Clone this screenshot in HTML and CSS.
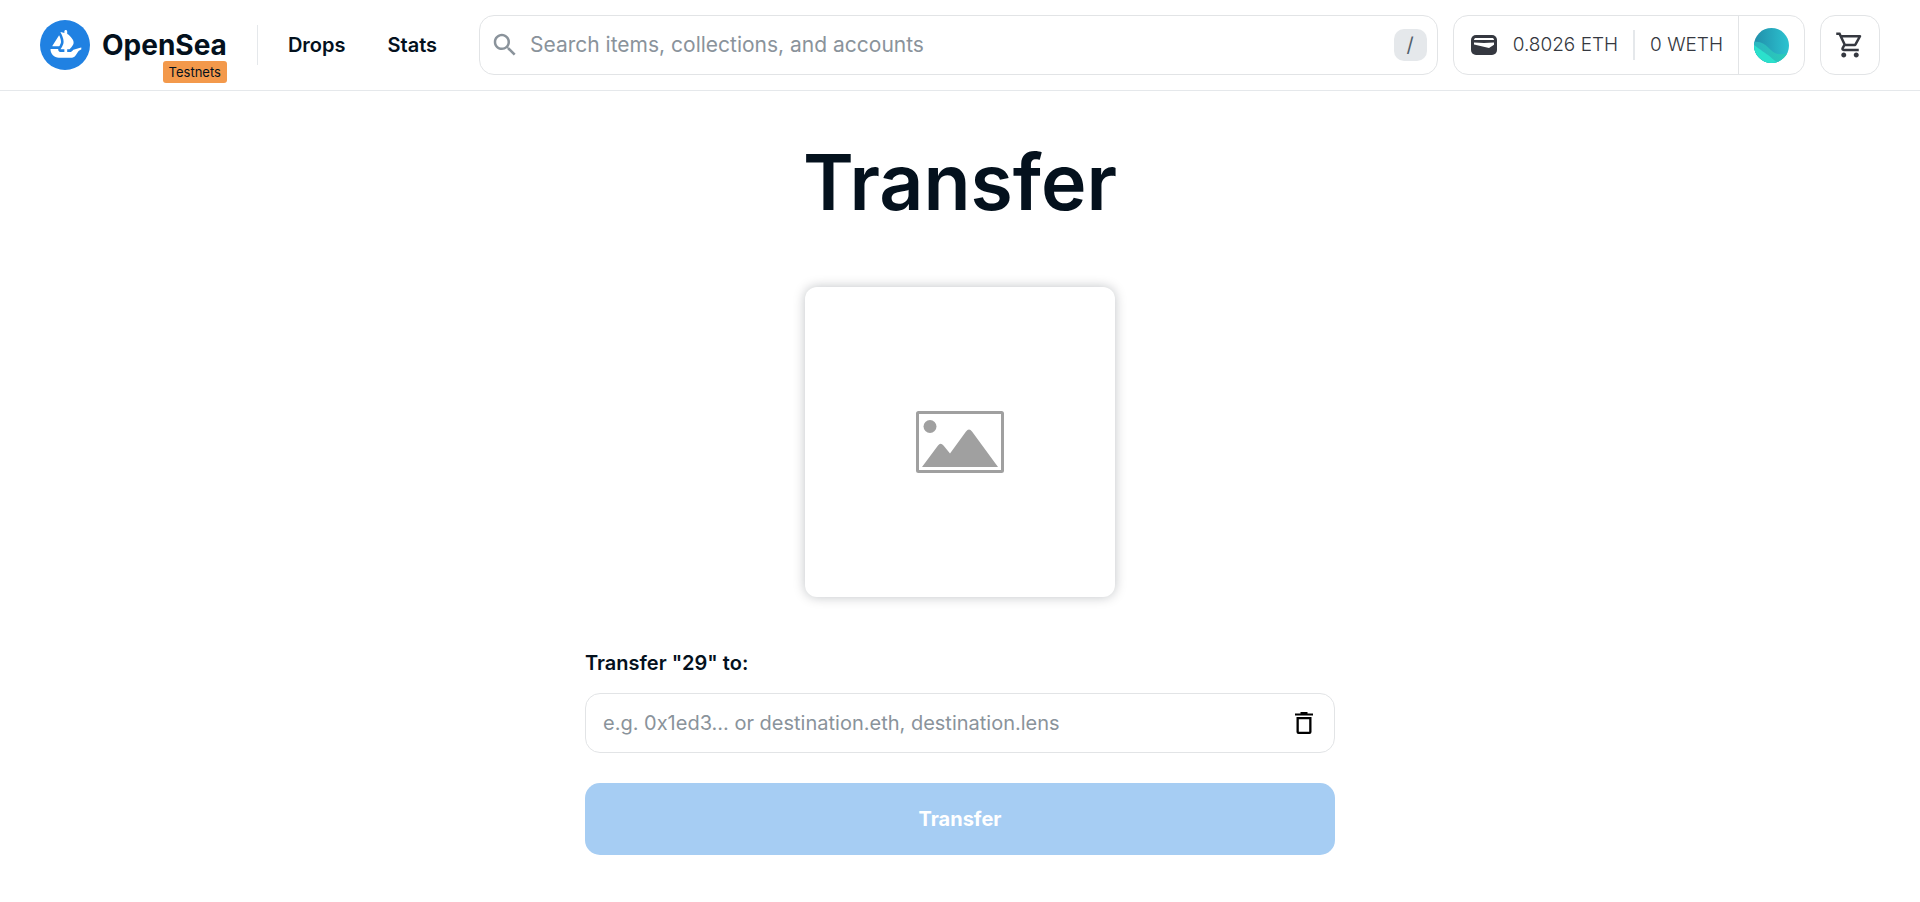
FILE: index.html
```html
<!DOCTYPE html>
<html lang="en">
<head>
<meta charset="utf-8">
<title>Transfer | OpenSea Testnets</title>
<link rel="stylesheet" href="styles.css">
</head>
<body>
<header class="header">
  <a class="brand" href="#">
    <svg class="brand-mark" viewBox="0 0 90 90" aria-hidden="true">
      <circle cx="45" cy="45" r="45" fill="#2081e2"/>
      <path fill="#fff" d="M22.2011 46.512L22.3953 46.2069L34.1016 27.8939C34.2726 27.6257 34.6749 27.6535 34.8043 27.9447C36.76 32.3277 38.4475 37.7786 37.6569 41.1721C37.3194 42.5683 36.3948 44.4593 35.3545 46.2069C35.2204 46.4612 35.0725 46.7109 34.9153 46.9513C34.8413 47.0622 34.7165 47.127 34.5824 47.127H22.5432C22.2196 47.127 22.0301 46.7756 22.2011 46.512Z"/>
      <path fill="#fff" d="M74.38 49.9149V52.8137C74.38 52.9801 74.2783 53.1281 74.1304 53.1928C73.2242 53.5812 70.1219 55.0052 68.832 56.799C65.5402 61.3807 63.0251 67.932 57.4031 67.932H33.949C25.6362 67.932 18.9 61.1726 18.9 52.8322V52.564C18.9 52.3421 19.0803 52.1618 19.3023 52.1618H32.3773C32.6361 52.1618 32.8257 52.4021 32.8026 52.6564C32.7102 53.5072 32.8673 54.3764 33.2696 55.167C34.0463 56.7435 35.655 57.7283 37.3934 57.7283H43.8662V52.675H37.4673C37.1391 52.675 36.9449 52.2959 37.1345 52.0277C37.9713 50.8257 38.8358 49.4895 39.6958 47.9684C40.2829 46.9421 40.8516 45.8463 41.3093 44.746C41.6746 43.7936 41.804 43.4653 41.8965 43.1371C42.3542 41.3617 42.4467 40.3723 42.4467 39.3459C42.4467 38.9437 42.4282 38.523 42.3912 38.1207C42.2247 36.4147 42.1554 36.031 42.0814 35.6288C41.9889 35.0416 41.8595 34.4591 41.7115 33.8719C41.5497 33.2478 41.4573 32.864 41.3278 32.4618C40.9626 31.1996 40.5418 29.9698 40.098 28.8186C39.2936 26.8213 39.0161 26.2203 38.7619 25.6516C38.2857 24.6437 38.1562 24.371 38.0268 24.112L36.9634 22.0824C36.8524 21.8836 37.0374 21.6478 37.2546 21.7078L42.2016 23.0488L43.8662 23.5111V20.5706C43.8662 19.1512 45.0035 18 46.4089 18C47.1116 18 47.7496 18.2866 48.2073 18.7536C48.665 19.2206 48.9517 19.8586 48.9517 20.5706V24.935L49.4787 25.0829C49.7284 25.2401 49.9133 25.3835 50.1491 25.5591C51.2495 26.4561 51.8181 26.9508 52.4423 27.5194C53.723 28.7076 54.6245 29.5861 55.4845 30.557C56.4415 31.6943 56.6957 31.9856 56.9177 32.2769C57.9256 33.687 58.0735 33.8904 58.1984 34.0892C58.5497 34.6209 58.8595 35.1711 59.1554 35.7212C59.8489 37.2608 60.1078 38.0098 60.2742 38.7588C60.547 40.756 60.51 41.5235 60.3436 42.2956C59.9598 43.5763 59.8489 43.9045 59.7056 44.2143C59.4281 44.8569 59.0999 45.4996 58.7115 46.1006C57.6112 47.7327 57.3939 48.0239 57.172 48.2828C56.238 49.434 55.9421 49.7808 55.6324 50.1137C54.8464 50.9736 54.6429 51.1725 54.458 51.3574L53.1635 52.5733C53.0896 52.638 52.9925 52.675 52.8907 52.675H48.9517V57.7283H53.9079C55.0175 57.7283 56.0716 57.3353 56.9223 56.6141C57.2136 56.3598 58.485 55.2594 59.9876 53.5997C60.0384 53.5442 60.1032 53.5026 60.1771 53.4841L73.8668 49.5265C74.1211 49.4525 74.38 49.6467 74.38 49.9149Z"/>
    </svg>
    <span class="brand-name">OpenSea<span class="brand-tag">Testnets</span></span>
  </a>
  <nav class="nav">
    <a class="nav-link" href="#">Drops</a>
    <a class="nav-link" href="#">Stats</a>
  </nav>
  <form class="search" role="search">
    <svg class="icon search-icon" viewBox="0 0 24 24" aria-hidden="true"><path d="M15.5 14h-.79l-.28-.27C15.41 12.59 16 11.11 16 9.5 16 5.91 13.09 3 9.5 3S3 5.91 3 9.5 5.91 16 9.5 16c1.61 0 3.09-.59 4.23-1.57l.27.28v.79l5 4.99L20.49 19l-4.99-5zm-6 0C7.01 14 5 11.99 5 9.5S7.01 5 9.5 5 14 7.01 14 9.5 11.99 14 9.5 14z"/></svg>
    <input class="text-input search-input" type="text" aria-label="Search" placeholder="Search items, collections, and accounts">
    <kbd class="shortcut">/</kbd>
  </form>
  <div class="account">
    <button class="wallet" type="button">
      <svg class="wallet-icon" viewBox="0 0 26 20" aria-hidden="true">
        <rect width="26" height="20" rx="5" fill="#353840"/>
        <path fill="#fff" d="M3 5c0-1.500 1-2 2-2h16c1 0 2 .5 2 2zM3 7.500c7 .6 13 .6 20 0v2.300L18 13 3 9.600z"/>
      </svg>
      <span>0.8026 ETH</span>
      <span class="weth">0 WETH</span>
    </button>
    <button class="profile" type="button" aria-label="Account">
      <svg class="avatar" viewBox="0 0 35 35" aria-hidden="true">
        <defs>
          <linearGradient id="sky" x1="0" y1="0" x2="1" y2="0"><stop offset="0" stop-color="#218eaa"/><stop offset="1" stop-color="#2cc3d0"/></linearGradient>
          <linearGradient id="sea" x1="0" y1="0" x2="1" y2="0"><stop offset="0" stop-color="#2bb5c0"/><stop offset="1" stop-color="#2acdb8"/></linearGradient>
          <clipPath id="disc"><circle cx="17.500" cy="17.500" r="17.500"/></clipPath>
        </defs>
        <g clip-path="url(#disc)">
          <rect width="35" height="35" fill="url(#sky)"/>
          <path fill="url(#sea)" d="M0 14C12 12 16 25 24 26S32 25 35 25V35H0z"/>
          <path fill="#2be0cc" d="M0 17C7 22 11 25 14 27S20 33 25 35H0z"/>
        </g>
      </svg>
    </button>
  </div>
  <button class="cart" type="button" aria-label="Cart">
    <svg class="icon" viewBox="0 0 24 24" aria-hidden="true"><path d="M15.550 13c.75 0 1.410-.41 1.750-1.030l3.580-6.490c.37-.66-.11-1.480-.87-1.480H5.210l-.94-2H1v2h2l3.600 7.590-1.350 2.440C4.520 15.370 5.480 17 7 17h12v-2H7l1.100-2h7.450zM6.160 6h12.150l-2.760 5H8.530L6.160 6zM7 18c-1.100 0-1.990.9-1.990 2S5.900 22 7 22s2-.9 2-2-.9-2-2-2zm10 0c-1.100 0-1.990.9-1.990 2s.89 2 1.990 2 2-.9 2-2-.9-2-2-2z"/></svg>
  </button>
</header>
<main class="main">
  <h1 class="title">Transfer</h1>
  <div class="asset">
    <svg class="placeholder" viewBox="0 0 88 62" role="img" aria-label="Item image">
      <rect x="1.500" y="1.500" width="85" height="59" rx="1" fill="none" stroke="#a0a0a0" stroke-width="3"/>
      <circle cx="14" cy="15.500" r="6.500" fill="#a0a0a0"/>
      <path fill="#a0a0a0" d="M6 56 22 34.500q2.500-3.500 5.500 0L34 42.500 50 20.500q3-4 6 0L82 56z"/>
    </svg>
  </div>
  <form class="form">
    <label class="label" for="destination">Transfer "29" to:</label>
    <div class="field">
      <input class="text-input" id="destination" type="text" placeholder="e.g. 0x1ed3... or destination.eth, destination.lens">
      <button class="clear" type="button" aria-label="Clear">
        <svg class="trash" viewBox="0 0 18 22" aria-hidden="true"><path d="M0 1.500h5.500V0h7v1.500H18v2H0zM1.500 5h15v15a2 2 0 0 1-2 2h-11a2 2 0 0 1-2-2zm2.300 2.200v12.600h10.400V7.200z"/></svg>
      </button>
    </div>
    <button class="submit" type="submit" disabled>Transfer</button>
  </form>
</main>
</body>
</html>
```
FILE: styles.css
```css
* { box-sizing: border-box; }

body {
  margin: 0;
  background: #fff;
  color: #04111d;
  font-family: Inter, "Open Sans", sans-serif;
  font-size: 20px;
  line-height: 30px;
}

button, input, kbd { font: inherit; color: inherit; }
button { padding: 0; border: 0; background: none; cursor: pointer; }
a { color: inherit; text-decoration: none; }
svg { display: block; flex: none; }

.header {
  display: flex;
  align-items: center;
  height: 91px;
  padding: 0 40px;
  border-bottom: 1px solid #e5e8eb;
}

.brand { display: flex; align-items: center; gap: 12px; }
.brand-mark { width: 50px; height: 50px; }
.brand-name { position: relative; font-size: 28px; font-weight: 700; line-height: 32px; }
.brand-tag {
  position: absolute;
  top: 100%;
  right: 0;
  height: 22px;
  padding: 0 6px;
  border-radius: 3px;
  background: #f3994b;
  font-size: 13px;
  font-weight: 400;
  line-height: 22px;
}

.nav {
  display: flex;
  align-items: center;
  gap: 42px;
  height: 40px;
  margin: 0 42px 0 30px;
  padding-left: 30px;
  border-left: 1px solid #e5e8eb;
  font-weight: 600;
}

.search, .account, .cart, .field {
  height: 60px;
  border: 1px solid #e2e4e6;
  border-radius: 15px;
}

.search { display: flex; flex: 1; align-items: center; padding: 0 10px; }
.icon { width: 30px; height: 30px; fill: #353840; }
.search-icon { margin-right: 10px; fill: #8a939b; }
.text-input {
  flex: 1;
  min-width: 0;
  padding: 0;
  border: 0;
  outline: 0;
  background: none;
}
.search-input { font-size: 21px; }
.text-input::placeholder { color: #8a939b; opacity: 1; }
.shortcut {
  width: 33px;
  height: 32px;
  border-radius: 10px;
  background: #e5e8eb;
  color: #52606b;
  line-height: 32px;
  text-align: center;
}

.account { display: flex; margin: 0 15px; color: #353840; }
.wallet {
  display: flex;
  align-items: center;
  padding: 0 15px 0 17px;
  font-size: 19px;
  font-weight: 300;
}
.wallet-icon { width: 26px; height: 20px; margin-right: 16px; }
.weth { margin-left: 15px; padding-left: 15px; border-left: 2px solid #e5e8eb; }
.profile { padding: 0 15px; border-left: 1px solid #e2e4e6; }
.avatar { width: 35px; height: 35px; }
.cart { display: grid; place-items: center; width: 60px; }

.main { display: flex; flex-direction: column; align-items: center; padding: 40px 20px; }
.title { margin: 0; font-size: 77px; font-weight: 600; line-height: 102px; }
.asset {
  display: grid;
  place-items: center;
  width: 310px;
  aspect-ratio: 1;
  margin: 54px 0 51px;
  border-radius: 12px;
  box-shadow: 0 0 12px rgba(4, 17, 29, 0.25);
}
.placeholder { width: 88px; }

.form { display: flex; flex-direction: column; width: 100%; max-width: 750px; }
.label { margin-bottom: 15px; font-weight: 600; }
.field { display: flex; align-items: center; padding: 0 20px 0 17px; }
.clear { padding: 5px 1px; }
.trash { width: 18px; height: 22px; }
.submit {
  height: 72px;
  margin-top: 30px;
  border-radius: 15px;
  background: #a6cdf3;
  color: #fff;
  font-weight: 700;
}
```
